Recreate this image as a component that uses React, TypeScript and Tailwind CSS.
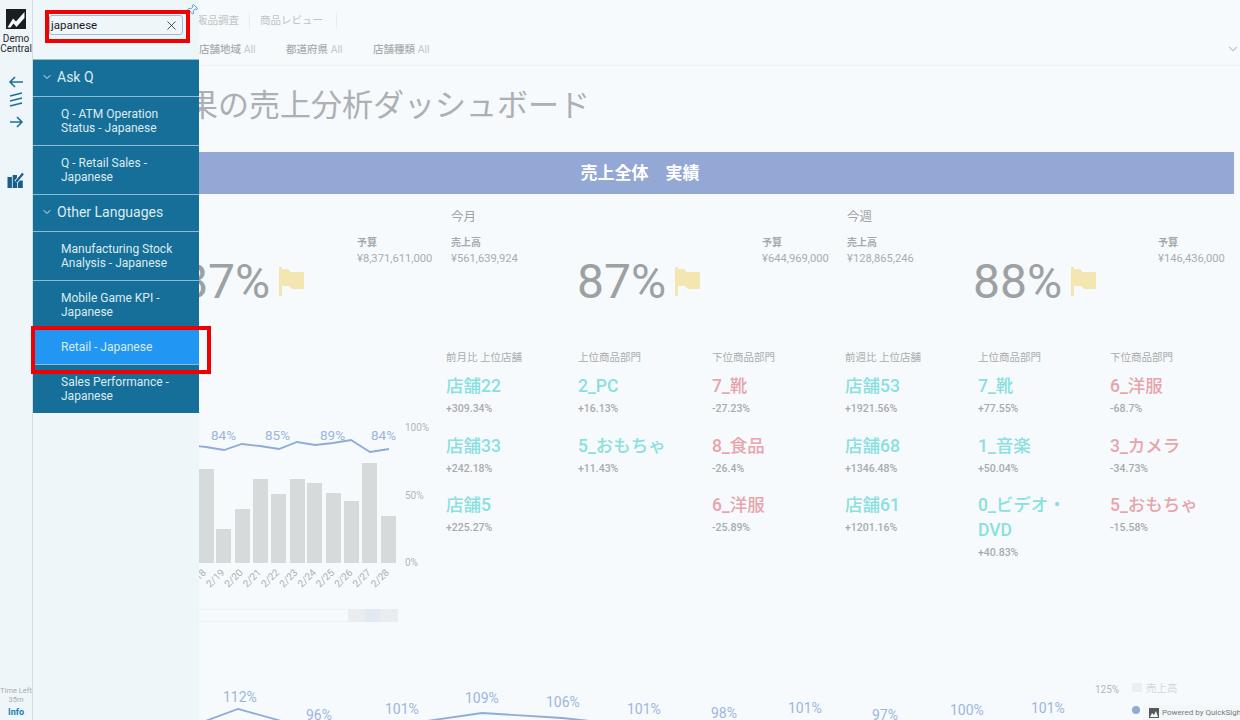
import { ChevronDown, Pin, X } from "lucide-react";

const FONT = "font-['Roboto','Noto_Sans_CJK_JP',sans-serif]";

function Flag() {
  return (
    <svg width="25" height="29" viewBox="0 0 25 29" className="mt-[10px] shrink-0">
      <path d="M0 0h3v2h6l3 3h13v17H13l-3-3H3v10H0z" fill="#f3e6b0" />
    </svg>
  );
}

function Kpi({ period, actual, pct, budget, pctWidth }: { period?: string; actual?: string; pct: string; budget: string; pctWidth: string }) {
  return (
    <div className="w-[396px] shrink-0">
      <div className="h-[26px] text-[12.5px] leading-[30px] text-[#9fa3a5]">{period}</div>
      <div className="flex h-[66px] items-start">
        <div className="mt-[8px] w-[126px] shrink-0">
          {actual && (
            <>
              <div className="text-[10px] font-bold leading-[14px] text-[#a6a9ab]">売上高</div>
              <div className="mt-[1px] text-[11.2px] leading-[15px] text-[#a9acae]">{actual}</div>
            </>
          )}
        </div>
        <div className={`mt-[29px] flex shrink-0 items-start gap-[9px] ${pctWidth}`}>
          <div className="text-[48px] leading-[50px] text-[#9da1a3]">{pct}</div>
          <Flag />
        </div>
        <div className="mt-[8px]">
          <div className="text-[10px] font-bold leading-[14px] text-[#a6a9ab]">予算</div>
          <div className="mt-[1px] text-[11.2px] leading-[15px] text-[#a9acae]">{budget}</div>
        </div>
      </div>
    </div>
  );
}

type Row = [string, string];

function RankList({ title, rows, tone, width }: { title: string; rows: Row[]; tone: "up" | "down"; width: string }) {
  return (
    <div className={width}>
      <div className="h-[23px] text-[10.5px] leading-[14px] text-[#a9acae]">{title}</div>
      {rows.map(([name, value]) => (
        <div key={name} className="min-h-[59.5px] pb-[8px]">
          <div className={`w-[100px] text-[17.5px] font-medium leading-[25px] ${tone === "up" ? "text-[#8adfe0]" : "text-[#e8a4ab]"}`}>
            {name}
          </div>
          <div className="mt-[3px] text-[10.5px] font-medium leading-[14px] text-[#a8abad]">{value}</div>
        </div>
      ))}
    </div>
  );
}

function Nav({ lines, active }: { lines: string[]; active?: boolean }) {
  return (
    <div
      className={`flex flex-col justify-center border-t border-[#8dbbd0] pl-[28px] text-[12px] leading-[14.5px] text-[#dcebf2] ${
        active ? "h-[35px] bg-[#2196f3]" : "h-[49px]"
      }`}
    >
      {lines.map((l) => (
        <div key={l}>{l}</div>
      ))}
    </div>
  );
}

function NavHeader({ children }: { children: string }) {
  return (
    <div className="flex h-[36px] items-center gap-[4px] pb-[2px] pl-[8px] text-[14px] text-[#dcebf2]">
      <ChevronDown size={12} strokeWidth={2} />
      {children}
    </div>
  );
}

const bars = [
  [183, 31, 469],
  [216, 15, 529],
  [235, 15, 509],
  [253, 15, 479],
  [271, 15, 494],
  [290, 15, 479],
  [307, 15, 483],
  [326, 15, 493],
  [344, 15, 501],
  [362, 15, 463],
  [381, 15, 516],
];
const dates = ["2/18", "2/19", "2/20", "2/21", "2/22", "2/23", "2/24", "2/25", "2/26", "2/27", "2/28"];

function DailyChart() {
  const pts = "180,444 206,447 224,450 242,444 260,446 279,449 297,442 315,445 333,443 351,440 370,452 389,449";
  return (
    <svg width="240" height="172" viewBox="198 420 240 172" className="block shrink-0" fontFamily="Roboto, Noto Sans CJK JP, sans-serif">
      {bars.map(([x, w, y]) => (
        <rect key={x} x={x} y={y} width={w} height={563 - y} fill="#d6dadb" />
      ))}
      <polyline points={pts} fill="none" stroke="#8fabd8" strokeWidth="1.8" />
      {[
        [211, "84%"],
        [265, "85%"],
        [320, "89%"],
        [371, "84%"],
      ].map(([x, t]) => (
        <text key={x} x={x as number} y="440" fontSize="13.5" fill="#9db6dc">
          {t}
        </text>
      ))}
      {[
        [405, 431, "100%"],
        [405, 499, "50%"],
        [405, 566, "0%"],
      ].map(([x, y, t]) => (
        <text key={t} x={x as number} y={y as number} fontSize="10" fill="#b3b6b8">
          {t}
        </text>
      ))}
      {dates.map((d, i) => {
        const x = 192 + i * 18.3;
        return (
          <text key={d} x={x} y="588" fontSize="10" fill="#adb0b2" transform={`rotate(-45 ${x} 588)`}>
            {d}
          </text>
        );
      })}
    </svg>
  );
}

function Scroller() {
  return (
    <div className="flex h-[13px] w-[200px] justify-end border-y border-[#edf1f3]">
      <div className="flex h-full items-center justify-center">
        <div className="h-[13px] w-[17px] bg-[#e9edef]" />
        <div className="h-[13px] w-[15px] bg-[#e1e9f3]" />
        <div className="h-[13px] w-[18px] bg-[#e9edef]" />
      </div>
    </div>
  );
}

const bottom: [number, number, string][] = [
  [223, 697, "112%"],
  [306, 715, "96%"],
  [385, 709, "101%"],
  [465, 698, "109%"],
  [546, 702, "106%"],
  [627, 709, "101%"],
  [711, 713, "98%"],
  [788, 708, "101%"],
  [872, 715, "97%"],
  [950, 710, "100%"],
  [1031, 708, "101%"],
];

function TrendChart() {
  return (
    <svg width="1042" height="44" viewBox="198 676 1042 44" className="block" fontFamily="Roboto, Noto Sans CJK JP, sans-serif">
      <polyline points="200,723 238,709 285,722" fill="none" stroke="#8fabd8" strokeWidth="1.8" />
      <polyline points="420,722 482,713 562,718 600,722" fill="none" stroke="#8fabd8" strokeWidth="1.8" />
      {bottom.map(([x, y, t]) => (
        <text key={x} x={x} y={y + 5} fontSize="14" fill="#9db6dc">
          {t}
        </text>
      ))}
      <text x="1095" y="693" fontSize="10" fill="#b3b6b8">
        125%
      </text>
      <rect x="1132" y="683" width="10" height="9" fill="#eceff0" />
      <text x="1146" y="692" fontSize="10.5" fill="#d5d8d9">
        売上高
      </text>
      <circle cx="1136" cy="710" r="4" fill="#8fabd8" />
    </svg>
  );
}

export default function App() {
  return (
    <div className={`relative flex h-[720px] w-[1240px] overflow-hidden bg-[#f6fafc] ${FONT}`}>
      {/* Rail */}
      <aside className="flex w-[33px] shrink-0 flex-col items-center border-r border-[#d3dbdf] bg-[#eff6f9]">
        <svg width="20" height="20" viewBox="0 0 20 20" className="mt-[9px] shrink-0">
          <rect width="20" height="20" fill="#1b1e20" />
          <path d="M1.5 18.5 L7 9.5 L10 12.5 L18.5 3 V9 L10.5 18 L7.5 14.5 L4.5 18.5Z" fill="#f5fafc" />
        </svg>
        <div className="mt-[5px] text-center text-[10px] leading-[9.5px] text-[#24292c]">
          Demo
          <br />
          Central
        </div>
        <svg width="16" height="54" viewBox="0 0 16 54" className="mt-[21px] shrink-0" fill="none" stroke="#1f6f97" strokeWidth="1.6">
          <path d="M15 8H2M7 3 2 8l5 5" />
          <path d="M2 22 14 19M2 27 14 24M2 32 14 29" />
          <path d="M2 48H14M9 43l5 5-5 5" />
        </svg>
        <svg width="18" height="18" viewBox="0 0 18 18" className="mt-[43px] shrink-0">
          <path d="M.5 6h4.4v11H.5zM5.7 4H10v13H5.7zM10.8 9.5h5V17h-5z" fill="#1a5f8a" />
          <path d="M9 11 16 2.5" stroke="#eff6f9" strokeWidth="4" />
          <path d="M9 11 16 2.5" stroke="#1a5f8a" strokeWidth="2.2" />
        </svg>
        <div className="mt-auto text-center text-[7.5px] leading-[8.5px] text-[#a7abad]">
          Time Left
          <br />
          35m
        </div>
        <div className="mb-[2px] mt-[2px] text-[9px] font-bold leading-[12px] text-[#1a7fb0]">Info</div>
      </aside>

      {/* Dashboard */}
      <main className="min-w-0 flex-1">
        <div className="flex h-[34px] items-end pb-[5px] pl-[164px] text-[10.5px] text-[#bfc3c5]">
          <span className="w-[53px] whitespace-nowrap border-r border-[#e8ecee] pr-[11px] text-right">販品調査</span>
          <span className="ml-[10px] w-[77px] whitespace-nowrap border-r border-[#e8ecee]">商品レビュー</span>
        </div>
        <div className="flex h-[32px] items-center border-b border-[#eef2f4] pl-[166px] text-[10.5px]">
          <span className="w-[87px] font-medium text-[#a9acae]">
            店舗地域 <span className="font-normal text-[#c5c8ca]">All</span>
          </span>
          <span className="w-[87px] font-medium text-[#a9acae]">
            都道府県 <span className="font-normal text-[#c5c8ca]">All</span>
          </span>
          <span className="font-medium text-[#a9acae]">
            店舗種類 <span className="font-normal text-[#c5c8ca]">All</span>
          </span>
          <ChevronDown size={14} strokeWidth={1.2} className="mb-[2px] ml-auto text-[#7d8183]" />
        </div>

        <h1 className="mt-[18px] h-[44px] pl-[154px] text-[31px] font-normal leading-[44px] text-[#adb0b2]">
          果の売上分析ダッシュボード
        </h1>

        <div className="ml-[13px] mt-[24px] flex h-[42px] w-[1188px] items-center justify-center bg-[#93a8d4] pt-[1px] text-[17px] font-bold text-white">
          売上全体　実績
        </div>

        <div className="mt-[8px] flex pl-[22px]">
          <Kpi pct="87%" pctWidth="w-[176px]" budget="¥8,371,611,000" />
          <Kpi period="今月" actual="¥561,639,924" pct="87%" pctWidth="w-[185px]" budget="¥644,969,000" />
          <Kpi period="今週" actual="¥128,865,246" pct="88%" pctWidth="w-[185px]" budget="¥146,436,000" />
        </div>

        <div className="mt-[57px] flex">
          <div className="w-[413px] shrink-0">
            <div className="ml-[165px] mt-[69px]">
              <DailyChart />
            </div>
            <div className="ml-[165px] mt-[17px]">
              <Scroller />
            </div>
          </div>
          <RankList
            width="w-[132px]"
            title="前月比 上位店舗"
            tone="up"
            rows={[
              ["店舗22", "+309.34%"],
              ["店舗33", "+242.18%"],
              ["店舗5", "+225.27%"],
            ]}
          />
          <RankList
            width="w-[134px]"
            title="上位商品部門"
            tone="up"
            rows={[
              ["2_PC", "+16.13%"],
              ["5_おもちゃ", "+11.43%"],
            ]}
          />
          <RankList
            width="w-[133px]"
            title="下位商品部門"
            tone="down"
            rows={[
              ["7_靴", "-27.23%"],
              ["8_食品", "-26.4%"],
              ["6_洋服", "-25.89%"],
            ]}
          />
          <RankList
            width="w-[133px]"
            title="前週比 上位店舗"
            tone="up"
            rows={[
              ["店舗53", "+1921.56%"],
              ["店舗68", "+1346.48%"],
              ["店舗61", "+1201.16%"],
            ]}
          />
          <RankList
            width="w-[132px]"
            title="上位商品部門"
            tone="up"
            rows={[
              ["7_靴", "+77.55%"],
              ["1_音楽", "+50.04%"],
              ["0_ビデオ・DVD", "+40.83%"],
            ]}
          />
          <RankList
            width="w-[130px]"
            title="下位商品部門"
            tone="down"
            rows={[
              ["6_洋服", "-68.7%"],
              ["3_カメラ", "-34.73%"],
              ["5_おもちゃ", "-15.58%"],
            ]}
          />
        </div>
      </main>

      {/* Bottom chart overlays the dashboard's lower edge */}
      <div className="absolute bottom-0 left-[198px]">
        <TrendChart />
      </div>

      {/* Powered by */}
      <div className="absolute bottom-0 right-0 flex h-[15px] w-[97px] items-center gap-[3px] overflow-hidden bg-[#f3f7f9] pl-[6px] text-[8px] text-[#777b7d]">
        <svg width="10" height="10" viewBox="0 0 10 10" className="shrink-0">
          <rect width="10" height="10" fill="#55595b" />
          <path d="M1 9 3 5l2 2 2-4 2 6z" fill="#f3f7f9" />
        </svg>
        <span className="whitespace-nowrap">Powered by QuickSight</span>
      </div>

      {/* Sidebar drawer */}
      <nav className="absolute bottom-0 left-[33px] top-0 flex w-[166px] flex-col bg-[#eef6f9]">
        <div className="relative h-[59px] shrink-0">
          <div className="ml-[16px] mt-[15px] flex h-[20px] w-[134px] items-center justify-between rounded-[3px] border border-[#9dbed1] bg-[#eef6f9] pl-[1px] pr-[3px] pt-[1px] text-[11.5px] text-[#16191b]">
            japanese
            <X size={15} strokeWidth={1.2} />
          </div>
          <Pin size={12} strokeWidth={1.6} className="absolute right-[1px] top-[4px] rotate-45 text-[#2a88c4]" />
        </div>
        <div className="border-t border-[#8dbbd0] bg-[#166f98]">
          <NavHeader>Ask Q</NavHeader>
          <Nav lines={["Q - ATM Operation", "Status - Japanese"]} />
          <Nav lines={["Q - Retail Sales -", "Japanese"]} />
          <div className="border-t border-[#8dbbd0]">
            <NavHeader>Other Languages</NavHeader>
          </div>
          <Nav lines={["Manufacturing Stock", "Analysis - Japanese"]} />
          <Nav lines={["Mobile Game KPI -", "Japanese"]} />
          <Nav lines={["Retail - Japanese"]} active />
          <Nav lines={["Sales Performance -", "Japanese"]} />
        </div>
      </nav>

      {/* Annotation boxes */}
      <div className="absolute left-[45px] top-[10px] h-[33px] w-[145px] border-[4px] border-[#f00000]" />
      <div className="absolute left-[31px] top-[326px] h-[48px] w-[180px] border-[4px] border-[#f00000]" />
    </div>
  );
}
